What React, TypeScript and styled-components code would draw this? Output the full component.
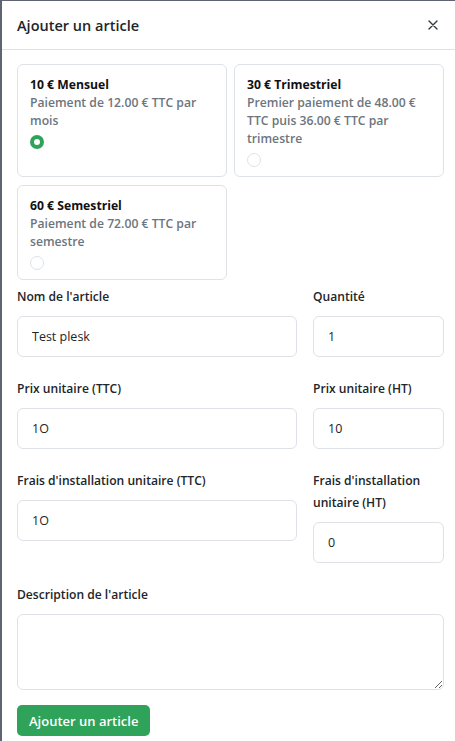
import React from "react";
import styled, { createGlobalStyle } from "styled-components";

const Global = createGlobalStyle`
  html, body { margin: 0; padding: 0; }
  body {
    background: #5f6470;
    font-family: "Open Sans", "Noto Sans", sans-serif;
    color: #212529;
    height: 741px;
    overflow: hidden;
  }
  * { box-sizing: border-box; }
`;

const Modal = styled.div`
  margin: 1px 0 0 2px;
  width: 453px;
  height: 740px;
  background: #fff;
  display: flex;
  flex-direction: column;
`;

const Header = styled.div`
  height: 49px;
  border-bottom: 1px solid #dee2e6;
  display: flex;
  align-items: center;
  justify-content: space-between;
  padding: 0 16px 0 15px;
  flex-shrink: 0;
`;

const Title = styled.h1`
  margin: 0;
  font-size: 14.5px;
  font-weight: 600;
  color: #212529;
`;

const Close = styled.button`
  border: 0;
  background: none;
  padding: 0;
  width: 12px;
  height: 12px;
  display: flex;
  align-items: center;
  justify-content: center;
  color: #343a40;
  cursor: pointer;
`;

const Body = styled.div`
  padding: 14px 11px 0 15px;
  display: flex;
  flex-direction: column;
`;

const Plans = styled.div`
  display: grid;
  grid-template-columns: 210px 210px;
  column-gap: 7px;
  row-gap: 8px;
  margin-bottom: 6px;
`;

const Card = styled.label`
  border: 1px solid #dee2e6;
  border-radius: 6px;
  padding: 11px 12px 9px 12px;
  display: flex;
  flex-direction: column;
  cursor: pointer;
`;

const PlanName = styled.div`
  font-size: 12.2px;
  font-weight: 700;
  line-height: 18px;
  color: #111;
`;

const PlanDesc = styled.div`
  font-size: 12.2px;
  font-weight: 600;
  line-height: 18px;
  color: #6c757d;
`;

const Radio = styled.span<{ $checked?: boolean }>`
  margin-top: 5px;
  width: 14px;
  height: 14px;
  border-radius: 50%;
  display: inline-block;
  border: ${(p) => (p.$checked ? "4px solid #2fa35a" : "1px solid #dee2e6")};
  background: #fff;
`;

const Form = styled.div`
  display: grid;
  grid-template-columns: 280px 131px;
  column-gap: 16px;
  align-items: start;
`;

const Field = styled.div<{ $full?: boolean }>`
  display: flex;
  flex-direction: column;
  margin-bottom: 21px;
  grid-column: ${(p) => (p.$full ? "1 / -1" : "auto")};
`;

const Label = styled.label`
  font-size: 12.1px;
  font-weight: 600;
  line-height: 22px;
  color: #212529;
  margin-bottom: 8px;
`;

const Input = styled.input`
  height: 41px;
  border: 1px solid #dee2e6;
  border-radius: 6px;
  padding: 0 14px;
  font-family: "Open Sans", "Noto Sans", sans-serif;
  font-size: 12.5px;
  color: #212529;
  outline: none;
  width: 100%;
`;

const TextArea = styled.textarea`
  height: 76px;
  border: 1px solid #dee2e6;
  border-radius: 6px;
  padding: 8px 14px;
  font-family: "Open Sans", "Noto Sans", sans-serif;
  font-size: 12.5px;
  outline: none;
  width: 100%;
  resize: vertical;
  display: block;
`;

const Submit = styled.button`
  align-self: flex-start;
  margin-top: -6px;
  height: 31px;
  padding: 0 12px;
  background: #2fa35a;
  color: #fff;
  border: 0;
  border-radius: 5px;
  font-family: "Open Sans", "Noto Sans", sans-serif;
  font-size: 13px;
  font-weight: 600;
`;

const plans = [
  { name: "10 € Mensuel", desc: "Paiement de 12.00 € TTC par mois", checked: true },
  { name: "30 € Trimestriel", desc: "Premier paiement de 48.00 € TTC puis 36.00 € TTC par trimestre" },
  { name: "60 € Semestriel", desc: "Paiement de 72.00 € TTC par semestre" },
];

export default function App() {
  return (
    <>
      <Global />
      <Modal>
        <Header>
          <Title>Ajouter un article</Title>
          <Close aria-label="Fermer">
            <svg width="10" height="10" viewBox="0 0 10 10">
              <path d="M1 1L9 9M9 1L1 9" stroke="currentColor" strokeWidth="1.4" strokeLinecap="round" />
            </svg>
          </Close>
        </Header>
        <Body>
          <Plans>
            {plans.map((p) => (
              <Card key={p.name}>
                <PlanName>{p.name}</PlanName>
                <PlanDesc>{p.desc}</PlanDesc>
                <Radio $checked={p.checked} />
              </Card>
            ))}
          </Plans>
          <Form>
            <Field>
              <Label>Nom de l'article</Label>
              <Input defaultValue="Test plesk" />
            </Field>
            <Field>
              <Label>Quantité</Label>
              <Input defaultValue="1" />
            </Field>
            <Field>
              <Label>Prix unitaire (TTC)</Label>
              <Input defaultValue="1O" />
            </Field>
            <Field>
              <Label>Prix unitaire (HT)</Label>
              <Input defaultValue="10" />
            </Field>
            <Field>
              <Label>Frais d'installation unitaire (TTC)</Label>
              <Input defaultValue="1O" />
            </Field>
            <Field>
              <Label>Frais d'installation unitaire (HT)</Label>
              <Input defaultValue="0" />
            </Field>
            <Field $full>
              <Label>Description de l'article</Label>
              <TextArea />
            </Field>
          </Form>
          <Submit>Ajouter un article</Submit>
        </Body>
      </Modal>
    </>
  );
}
